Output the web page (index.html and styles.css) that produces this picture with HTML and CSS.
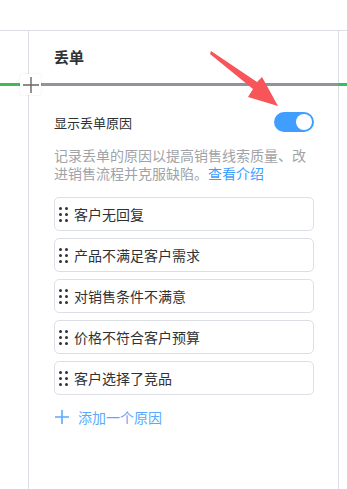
FILE: index.html
```html
<!DOCTYPE html>
<html lang="zh">
<head>
    <meta charset="UTF-8">
    <meta name="viewport" content="width=device-width, initial-scale=1.0">
    <link rel="stylesheet" href="styles.css">
    <title>丢单</title>
</head>
<body>
    <div class="frame">
        <div class="panel">
            <h2 class="title">丢单</h2>
            <div class="setting">
                <span class="label">显示丢单原因</span>
                <span class="switch on"><span class="knob"></span></span>
            </div>
            <p class="desc">记录丢单的原因以提高销售线索质量、改进销售流程并克服缺陷。<a class="link" href="#">查看介绍</a></p>
            <ul class="reasons">
                <li class="reason"><span class="handle"><i></i><i></i><i></i><i></i><i></i><i></i></span>客户无回复</li>
                <li class="reason"><span class="handle"><i></i><i></i><i></i><i></i><i></i><i></i></span>产品不满足客户需求</li>
                <li class="reason"><span class="handle"><i></i><i></i><i></i><i></i><i></i><i></i></span>对销售条件不满意</li>
                <li class="reason"><span class="handle"><i></i><i></i><i></i><i></i><i></i><i></i></span>价格不符合客户预算</li>
                <li class="reason"><span class="handle"><i></i><i></i><i></i><i></i><i></i><i></i></span>客户选择了竞品</li>
            </ul>
            <a class="add" href="#">
                <svg width="16" height="16" viewBox="0 0 16 16"><path d="M8 1v14M1 8h14" stroke="currentColor" stroke-width="1.6" fill="none"/></svg>
                添加一个原因
            </a>
        </div>
    </div>

    <!-- guide line overlay -->
    <div class="guide"></div>
    <div class="guide-plus">
        <svg width="16" height="16" viewBox="0 0 16 16"><path d="M8 0v16M0 8h16" stroke="#666" stroke-width="1.4" fill="none"/></svg>
    </div>

    <!-- annotation arrow -->
    <svg class="arrow" width="347" height="140" viewBox="0 0 347 140">
        <polygon points="211,51 257,82 262,77 278,106 248,97 253,89 210,54" fill="#f7555a"/>
    </svg>
</body>
</html>
```

FILE: styles.css
```css
body {
    margin: 0;
    background: #fff;
    font-family: "Noto Sans CJK SC", "Noto Sans", sans-serif;
    color: #303133;
}

.frame {
    margin-top: 30px;
    border-top: 1px solid #dcdfe6;
    height: 458px;
}

.panel {
    margin-left: 28px;
    width: 311px;
    height: 100%;
    box-sizing: border-box;
    border-left: 1px solid #dcdfe6;
    border-right: 1px solid #dcdfe6;
    padding: 16px 24px 0 25px;
}

.title {
    margin: 0;
    font-size: 15px;
    line-height: 20px;
    font-weight: 700;
    color: #303133;
}

.setting {
    display: flex;
    align-items: center;
    justify-content: space-between;
    margin-top: 45px;
    height: 20px;
}

.label {
    font-size: 13px;
    color: #303133;
}

.switch {
    width: 40px;
    height: 20px;
    border-radius: 10px;
    background: #dcdfe6;
    position: relative;
}

.switch.on {
    background: #409eff;
}

.knob {
    position: absolute;
    top: 2px;
    left: 2px;
    width: 16px;
    height: 16px;
    border-radius: 50%;
    background: #fff;
}

.switch.on .knob {
    left: 22px;
}

.desc {
    margin: 14px 0 0;
    font-size: 14px;
    line-height: 18px;
    color: #a0a3a8;
}

.link {
    color: #409eff;
    text-decoration: none;
}

.reasons {
    list-style: none;
    margin: 15px 0 0;
    padding: 0;
    display: flex;
    flex-direction: column;
    gap: 7px;
}

.reason {
    display: flex;
    align-items: center;
    height: 34px;
    box-sizing: border-box;
    border: 1px solid #dcdfe6;
    border-radius: 5px;
    padding-left: 4px;
    font-size: 14px;
    color: #303133;
}

.handle {
    display: grid;
    grid-template-columns: 3px 3px;
    column-gap: 3px;
    row-gap: 3px;
    margin-right: 6px;
}

.handle i {
    width: 3px;
    height: 3px;
    border-radius: 50%;
    background: #303133;
}

.add {
    display: flex;
    align-items: center;
    gap: 8px;
    margin-top: 12px;
    font-size: 14px;
    color: #5aa9ff;
    text-decoration: none;
}

.guide {
    position: absolute;
    top: 83px;
    left: 0;
    right: 0;
    height: 3px;
    background: linear-gradient(to right, #3dbb5a 0, #3dbb5a 28px, #909399 28px, #909399 338px, #3dbb5a 338px);
}

.guide-plus {
    position: absolute;
    top: 74px;
    left: 20px;
    width: 21px;
    height: 21px;
    background: #fff;
    border-radius: 3px;
    box-shadow: 0 0 2px rgba(0, 0, 0, 0.12);
    display: flex;
    align-items: center;
    justify-content: center;
}

.arrow {
    position: absolute;
    top: 0;
    left: 0;
}
```
